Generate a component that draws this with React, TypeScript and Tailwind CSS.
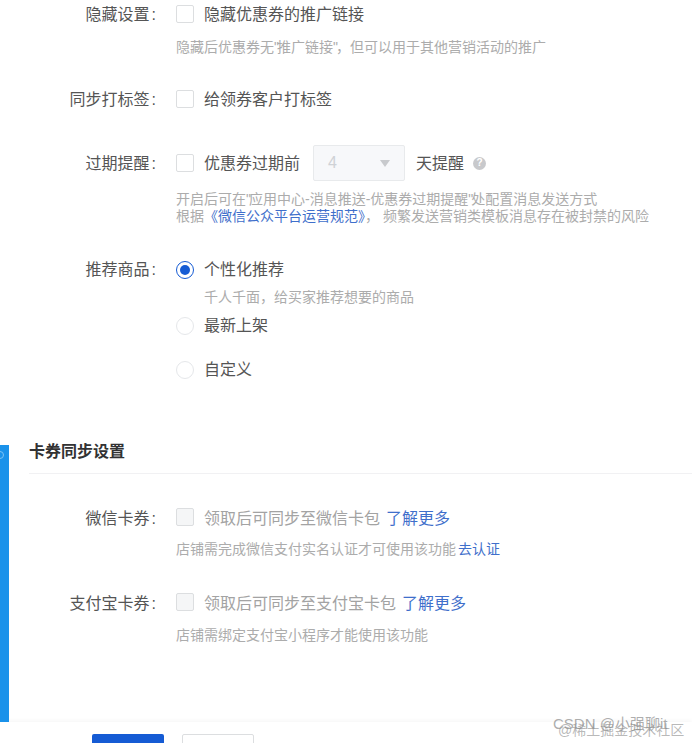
const font = "font-['Liberation_Sans','Noto_Sans_CJK_SC',sans-serif]"

function Check({ disabled = false }: { disabled?: boolean }) {
  return (
    <span
      className={`h-[18px] w-[18px] shrink-0 rounded-[2px] border border-[#dcdee0] ${disabled ? "bg-[#f5f6f7]" : "bg-white"}`}
    />
  )
}

function Radio({ checked = false }: { checked?: boolean }) {
  return checked ? (
    <span className="flex h-[18px] w-[18px] shrink-0 items-center justify-center rounded-full border border-[#155bd4]">
      <span className="h-[10px] w-[10px] rounded-full bg-[#155bd4]" />
    </span>
  ) : (
    <span className="h-[18px] w-[18px] shrink-0 rounded-full border border-[#e5e7ea] bg-white" />
  )
}

function Label({ children, className = "" }: { children: string; className?: string }) {
  return (
    <div className={`w-[158px] shrink-0 pr-[2px] text-right text-[16px] leading-[24px] text-[#555] ${className}`}>
      {children}
      <span className="ml-[2px]">:</span>
    </div>
  )
}

function Hint({ children, className = "" }: { children: React.ReactNode; className?: string }) {
  return <div className={`text-[14px] leading-[17px] text-[#acacac] ${className}`}>{children}</div>
}

function A({ children, className = "" }: { children: string; className?: string }) {
  return <span className={`text-[#3f6fcb] ${className}`}>{children}</span>
}

// the straight quotes sit tight against the text in the hints
function Q() {
  return <span className="tracking-[-2px]">"</span>
}

export default function App() {
  return (
    <div className={`relative h-[743px] w-[692px] overflow-hidden bg-white ${font}`}>
      {/* 优惠券设置 */}
      <section className="h-[445px] pt-[2px]">
        <div className="flex">
          <Label className="pt-[1px]">隐藏设置</Label>
          <div className="ml-[18px]">
            <div className="flex h-[24px] items-center gap-[10px] text-[16px] text-[#555]">
              <Check />
              <span className="pt-[2px]">隐藏优惠券的推广链接</span>
            </div>
            <Hint className="mt-[13px]">
              隐藏后优惠券无<Q />推广链接<Q />，但可以用于其他营销活动的推广
            </Hint>
          </div>
        </div>

        <div className="mt-[31px] flex">
          <Label className="pt-[1px]">同步打标签</Label>
          <div className="ml-[18px] flex h-[24px] items-center gap-[10px] text-[16px] text-[#555]">
            <Check />
            <span className="pt-[2px]">给领券客户打标签</span>
          </div>
        </div>

        <div className="mt-[33px] flex">
          <div className="flex h-[36px] items-center">
            <Label className="pt-[1px]">过期提醒</Label>
          </div>
          <div className="ml-[18px]">
            <div className="flex h-[36px] items-center text-[16px] text-[#555]">
              <Check />
              <span className="ml-[10px] pt-[2px]">优惠券过期前</span>
              <div className="ml-[13px] flex h-[36px] w-[92px] items-center justify-between rounded-[2px] border border-[#e8eaec] bg-[#f7f8fa] pr-[14px] pl-[14px] text-[#cfd2d6]">
                <span>4</span>
                <svg width="10" height="7" viewBox="0 0 10 7">
                  <path d="M0 0h10L5 7z" fill="#c8cacd" />
                </svg>
              </div>
              <span className="ml-[11px] pt-[2px]">天提醒</span>
              <span className="ml-[9px] flex h-[13px] w-[13px] items-center justify-center rounded-full bg-[#c8c9cc] text-[10px] leading-none font-bold text-white">
                ?
              </span>
            </div>
            <Hint className="mt-[10px]">
              开启后可在<Q />应用中心-消息推送-优惠券过期提醒<Q />处配置消息发送方式
            </Hint>
            <Hint>
              根据<A>《微信公众平台运营规范》</A>，<span className="ml-[4px]">频繁发送营销类模板消息存在被封禁的风险</span>
            </Hint>
          </div>
        </div>

        <div className="mt-[33px] flex">
          <Label>推荐商品</Label>
          <div className="ml-[18px] text-[16px] text-[#555]">
            <div className="flex h-[24px] items-center gap-[10px]">
              <Radio checked />
              <span>个性化推荐</span>
            </div>
            <Hint className="mt-[7px] ml-[28px]">千人千面，给买家推荐想要的商品</Hint>
            <div className="mt-[8px] flex h-[24px] items-center gap-[10px]">
              <Radio />
              <span>最新上架</span>
            </div>
            <div className="mt-[20px] flex h-[24px] items-center gap-[10px]">
              <Radio />
              <span>自定义</span>
            </div>
          </div>
        </div>
      </section>

      {/* 卡券同步设置 */}
      <section className="flex h-[277px]">
        <div className="flex h-full w-[9px] shrink-0 flex-col items-start bg-[#1a92ea] pt-[4px]">
          <svg width="5" height="12" viewBox="0 0 5 12">
            <circle cx="0" cy="6" r="3.5" fill="none" stroke="#7cc3f5" />
          </svg>
        </div>
        <div className="-mt-[6px] ml-[20px] flex-1">
          <div className="h-[35px] border-b border-[#f1f1f3] pt-[1px]">
            <h2 className="text-[16px] leading-[24px] font-bold text-[#323233]">卡券同步设置</h2>
          </div>

          <div className="mt-[31px] -ml-[29px] flex">
            <Label className="pt-[2px]">微信卡券</Label>
            <div className="ml-[18px]">
              <div className="flex h-[24px] items-center gap-[10px] text-[16px] text-[#a3a3a3]">
                <Check disabled />
                <span className="pt-[3px]">
                  领取后可同步至微信卡包<A className="ml-[6px]">了解更多</A>
                </span>
              </div>
              <Hint className="mt-[12px]">
                店铺需完成微信支付实名认证才可使用该功能<A className="ml-[2px]">去认证</A>
              </Hint>
            </div>
          </div>

          <div className="mt-[32px] -ml-[29px] flex">
            <Label className="pt-[2px]">支付宝卡券</Label>
            <div className="ml-[18px]">
              <div className="flex h-[24px] items-center gap-[10px] text-[16px] text-[#a3a3a3]">
                <Check disabled />
                <span className="pt-[3px]">
                  领取后可同步至支付宝卡包<A className="ml-[6px]">了解更多</A>
                </span>
              </div>
              <Hint className="mt-[13px]">店铺需绑定支付宝小程序才能使用该功能</Hint>
            </div>
          </div>
        </div>
      </section>

      {/* 底部按钮 */}
      <footer className="flex h-[21px] gap-[18px] pt-[12px] pl-[92px] shadow-[0_-2px_4px_rgba(0,0,0,0.03)]">
        <div className="h-[36px] w-[72px] rounded-[2px] bg-[#155bd4]" />
        <div className="h-[36px] w-[72px] rounded-[2px] border border-[#dcdee0] bg-white" />
      </footer>

      {/* 水印 */}
      <div className="absolute top-[714px] left-[553px] text-[15px] leading-[20px] whitespace-nowrap text-[#8a8a8a]/70">
        CSDN @小强聊it
      </div>
      <div className="absolute top-[721px] left-[558px] text-[14px] leading-[18px] whitespace-nowrap text-[#8a8a8a]/60">
        @稀土掘金技术社区
      </div>
    </div>
  )
}
